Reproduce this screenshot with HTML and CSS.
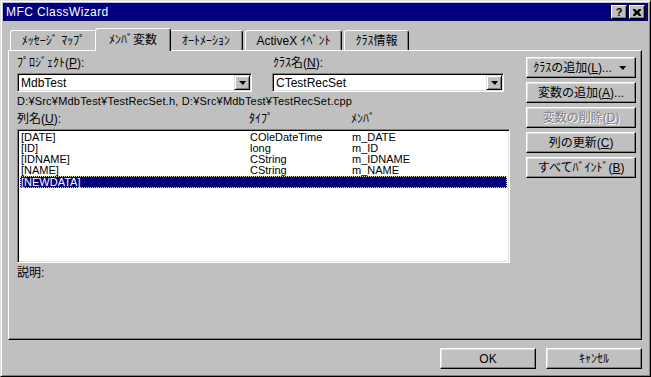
FILE: index.html
```html
<!DOCTYPE html>
<html>
<head>
	<title>MFC ClassWizard</title>
	<link rel="stylesheet" href="styles.css">
</head>
<body>
	<div class="window">
		<div class="titlebar">
			<span class="title">MFC ClassWizard</span>
			<div class="caption-btns">
				<span class="cap-btn help">?</span>
				<span class="cap-btn close">
					<svg width="8" height="7" viewBox="0 0 8 7"><path d="M0 0h2l2 2 2-2h2v1L6 3.5 8 6v1H6L4 5 2 7H0V6l2-2.5L0 1z" fill="#000"/></svg>
				</span>
			</div>
		</div>

		<div class="client">
			<div class="tabs">
				<div class="tab tab-msg">ﾒｯｾｰｼﾞ ﾏｯﾌﾟ</div>
				<div class="tab tab-member active">ﾒﾝﾊﾞ変数</div>
				<div class="tab tab-auto">ｵｰﾄﾒｰｼｮﾝ</div>
				<div class="tab tab-event">ActiveX ｲﾍﾞﾝﾄ</div>
				<div class="tab tab-info">ｸﾗｽ情報</div>
			</div>

			<div class="panel">
				<div class="main">
					<div class="fields">
						<div class="field field-project">
							<div class="label">ﾌﾟﾛｼﾞｪｸﾄ(<u>P</u>):</div>
							<div class="combo">
								<span class="combo-text">MdbTest</span>
								<span class="combo-btn"><i class="arrow"></i></span>
							</div>
						</div>
						<div class="field field-class">
							<div class="label">ｸﾗｽ名(<u>N</u>):</div>
							<div class="combo">
								<span class="combo-text">CTestRecSet</span>
								<span class="combo-btn"><i class="arrow"></i></span>
							</div>
						</div>
					</div>

					<div class="path">D:¥Src¥MdbTest¥TestRecSet.h, D:¥Src¥MdbTest¥TestRecSet.cpp</div>

					<div class="list-head">
						<span>列名(<u>U</u>):</span>
						<span>ﾀｲﾌﾟ</span>
						<span>ﾒﾝﾊﾞ</span>
					</div>

					<div class="listbox">
						<div class="row"><span>[DATE]</span><span>COleDateTime</span><span>m_DATE</span></div>
						<div class="row"><span>[ID]</span><span>long</span><span>m_ID</span></div>
						<div class="row"><span>[IDNAME]</span><span>CString</span><span>m_IDNAME</span></div>
						<div class="row"><span>[NAME]</span><span>CString</span><span>m_NAME</span></div>
						<div class="row selected"><span>[NEWDATA]</span><span></span><span></span></div>
					</div>

					<div class="desc">説明:</div>
				</div>

				<div class="side">
					<div class="btn btn-menu"><span>ｸﾗｽの追加(<u>L</u>)...</span><i class="arrow"></i></div>
					<div class="btn">変数の追加(<u>A</u>)...</div>
					<div class="btn disabled">変数の削除(<u>D</u>)</div>
					<div class="btn">列の更新(<u>C</u>)</div>
					<div class="btn">すべてﾊﾞｲﾝﾄﾞ(<u>B</u>)</div>
				</div>
			</div>

			<div class="footer">
				<div class="btn btn-wide">OK</div>
				<div class="btn btn-wide">ｷｬﾝｾﾙ</div>
			</div>
		</div>
	</div>
</body>
</html>
```

FILE: styles.css
```css
   body {
	  margin: 0;
	  background: #c0c0c0;
	  font: 11px/14px "Liberation Sans", "Noto Sans CJK JP", sans-serif;
	  color: #000;
   }
   u {
	  text-decoration: underline;
	  text-underline-offset: 1px;
   }

   /* window frame */
   .window {
	  width: 651px;
	  height: 377px;
	  box-sizing: border-box;
	  padding: 2px;
	  background: #c0c0c0;
	  border: 1px solid;
	  border-color: #dfdfdf #000 #000 #dfdfdf;
	  box-shadow: inset 1px 1px #fff, inset -1px -1px #808080;
   }
   .titlebar {
	  height: 18px;
	  background: #000080;
	  display: flex;
	  align-items: center;
	  justify-content: space-between;
	  padding: 0 3px 0 3px;
   }
   .title {
	  color: #fff;
	  font-size: 12px;
	  letter-spacing: 0.4px;
   }
   .caption-btns {
	  display: flex;
	  gap: 2px;
   }
   .cap-btn {
	  width: 16px;
	  height: 14px;
	  box-sizing: border-box;
	  display: flex;
	  align-items: center;
	  justify-content: center;
	  background: #c0c0c0;
	  border: 1px solid;
	  border-color: #fff #000 #000 #fff;
	  box-shadow: inset -1px -1px #808080;
	  font: bold 11px/12px "Liberation Sans", sans-serif;
   }
   .cap-btn.help {
	  padding-bottom: 1px;
   }

   /* dialog body */
   .client {
	  padding: 7px 6px 0 5px;
   }
   .tabs {
	  display: flex;
	  height: 22px;
	  padding-left: 2px;
	  position: relative;
	  z-index: 1;
	  font-size: 12px;
   }
   .tab {
	  box-sizing: border-box;
	  height: 20px;
	  margin-top: 2px;
	  padding: 3px 0 0 0;
	  text-align: center;
	  border: 1px solid;
	  border-bottom: none;
	  border-color: #fff #000 transparent #fff;
	  border-radius: 3px 3px 0 0;
	  box-shadow: inset -1px 0 #808080;
	  background: #c0c0c0;
   }
   .tab-msg { width: 87px; }
   .tab-member { width: 72px; }
   .tab-auto { width: 74px; }
   .tab-event { width: 97px; margin-left: 2px; }
   .tab-info { width: 65px; margin-left: 2px; }
   .tab.active {
	  height: 23px;
	  margin: 0 -2px -1px -2px;
	  width: 76px;
	  padding-top: 4px;
	  position: relative;
	  z-index: 2;
   }

   .panel {
	  height: 290px;
	  box-sizing: border-box;
	  border: 1px solid;
	  border-color: #fff #000 #000 #fff;
	  box-shadow: inset -1px -1px #808080;
	  display: flex;
	  padding: 5px 5px 0 8px;
   }
   .main {
	  width: 494px;
   }
   .fields {
	  display: flex;
	  gap: 20px;
   }
   .field-project { width: 235px; }
   .field-class { width: 232px; }
   .field-class .label { padding-left: 1px; }
   .label {
	  height: 14px;
	  margin-bottom: 3px;
	  font-size: 12px;
   }

   .combo {
	  height: 19px;
	  box-sizing: border-box;
	  background: #fff;
	  border: 1px solid;
	  border-color: #808080 #fff #fff #808080;
	  box-shadow: inset 1px 1px #000, inset -1px -1px #dfdfdf;
	  display: flex;
	  align-items: center;
	  justify-content: space-between;
	  padding: 1px 1px 1px 3px;
	  font-size: 12px;
   }
   .combo-text {
	  line-height: 14px;
   }
   .combo-btn {
	  width: 16px;
	  height: 15px;
	  box-sizing: border-box;
	  background: #c0c0c0;
	  border: 1px solid;
	  border-color: #dfdfdf #000 #000 #dfdfdf;
	  box-shadow: inset 1px 1px #fff, inset -1px -1px #808080;
	  display: flex;
	  align-items: center;
	  justify-content: center;
   }
   .arrow {
	  display: block;
	  width: 0;
	  height: 0;
	  border-left: 4px solid transparent;
	  border-right: 3px solid transparent;
	  border-top: 4px solid #000;
   }

   .path {
	  margin-top: 2px;
	  height: 14px;
	  white-space: nowrap;
	  letter-spacing: 0.2px;
   }
   .list-head {
	  margin-top: 4px;
	  height: 14px;
	  display: grid;
	  grid-template-columns: 232px 102px 1fr;
	  font-size: 12px;
   }

   .listbox {
	  margin-top: 3px;
	  height: 134px;
	  box-sizing: border-box;
	  background: #fff;
	  border: 1px solid;
	  border-color: #808080 #fff #fff #808080;
	  box-shadow: inset 1px 1px #000, inset -1px -1px #dfdfdf;
	  padding: 2px 2px 0 2px;
   }
   .row {
	  display: grid;
	  grid-template-columns: 229px 102px 1fr;
	  height: 11px;
	  line-height: 11px;
	  padding-left: 1px;
   }
   .row.selected {
	  height: 12px;
	  line-height: 12px;
	  background: #000080;
	  color: #fff;
	  outline: 1px dotted #e8e890;
	  outline-offset: -1px;
   }

   .desc {
	  margin-top: 3px;
	  font-size: 12px;
   }

   /* buttons */
   .side {
	  margin-left: 16px;
	  width: 110px;
	  padding-top: 1px;
	  display: flex;
	  flex-direction: column;
	  gap: 4px;
   }
   .btn {
	  height: 21px;
	  box-sizing: border-box;
	  background: #c0c0c0;
	  border: 1px solid;
	  border-color: #fff #000 #000 #fff;
	  box-shadow: inset -1px -1px #808080, inset 1px 1px #dfdfdf;
	  display: flex;
	  align-items: center;
	  justify-content: center;
	  padding-top: 1px;
	  font-size: 12px;
   }
   .btn-menu {
	  justify-content: space-between;
	  padding: 1px 9px 0 6px;
   }
   .btn.disabled {
	  color: #808080;
	  text-shadow: 1px 1px #fff;
   }

   .footer {
	  display: flex;
	  justify-content: flex-end;
	  gap: 10px;
	  margin-top: 8px;
   }
   .btn-wide {
	  width: 96px;
	  height: 21px;
   }
```
